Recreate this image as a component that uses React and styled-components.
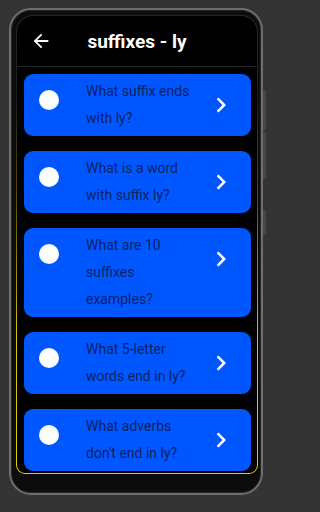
import React from 'react'
import styled, { createGlobalStyle } from 'styled-components'
import { MdArrowBack, MdChevronRight } from 'react-icons/md'

const questions = [
    'What suffix ends with ly?',
    'What is a word with suffix ly?',
    'What are 10 suffixes examples?',
    'What 5-letter words end in ly?',
    "What adverbs don't end in ly?",
]

function App () {
    return (
        <Page>
            <GlobalStyle />
            <Device>
                <SideButton top={80} h={40} />
                <SideButton top={122} h={47} />
                <SideButton top={200} h={25} />
                <ScreenEdge>
                    <Screen>
                        <Header>
                            <BackButton aria-label="back">
                                <MdArrowBack size={22} />
                            </BackButton>
                            <Title>suffixes - ly</Title>
                            <span />
                        </Header>
                        <List>
                            {questions.map(q => (
                                <Card key={q}>
                                    <Dot />
                                    <Question>{q}</Question>
                                    <Chevron>
                                        <MdChevronRight size={30} />
                                    </Chevron>
                                </Card>
                            ))}
                        </List>
                    </Screen>
                </ScreenEdge>
            </Device>
        </Page>
    )
}

export default App

const GlobalStyle = createGlobalStyle`
html, body {
    margin: 0;
    background: #343434;
    font-family: Roboto, "Liberation Sans", sans-serif;
}
`
const Page = styled.div`
width: 278px;
height: 512px;
padding: 8px 0 0 9px;
box-sizing: border-box;
overflow: hidden;
`
const Device = styled.div`
position: relative;
width: 254px;
height: 487px;
box-sizing: border-box;
padding: 5px 3px 19px 5px;
border: 2px solid #6e6e6e;
border-radius: 22px;
background: #0c0c0c;
box-shadow: inset 0 0 0 1px #262626;
`
const SideButton = styled.div`
position: absolute;
right: -5px;
top: ${p => p.top}px;
width: 3px;
height: ${p => p.h}px;
border-radius: 0 2px 2px 0;
background: #474747;
`
const ScreenEdge = styled.div`
height: 100%;
padding: 1px;
box-sizing: border-box;
border-radius: 17px 17px 9px 9px;
background: linear-gradient(to bottom, #262626 0%, #1e1e1e 18%, #5a5200 40%, #d6c400 70%, #e0cc00 100%);
`
const Screen = styled.div`
height: 100%;
border-radius: 16px 16px 8px 8px;
background: #000;
overflow: hidden;
`
const Header = styled.header`
display: grid;
grid-template-columns: 1fr auto 1fr;
align-items: center;
height: 50px;
border-bottom: 1px solid #242424;
`
const BackButton = styled.button`
display: flex;
align-items: center;
padding: 0 0 0 13px;
border: 0;
background: none;
color: #fff;
`
const Title = styled.h1`
margin: 0;
font-size: 19px;
font-weight: 700;
color: #fff;
`
const List = styled.div`
display: flex;
flex-direction: column;
gap: 15px;
padding: 7px 6px 0 7px;
`
const Card = styled.div`
display: flex;
align-items: flex-start;
padding: 4px 0 4px 15px;
border-radius: 9px;
background: #0057ff;
`
const Dot = styled.div`
flex: 0 0 20px;
height: 20px;
margin-top: 12px;
border-radius: 50%;
background: #fff;
`
const Question = styled.p`
flex: 0 0 118px;
margin: 0 0 0 27px;
font-size: 14px;
line-height: 27px;
color: #10215e;
`
const Chevron = styled.div`
display: flex;
margin: 12px 15px 0 auto;
color: #fff;
`
